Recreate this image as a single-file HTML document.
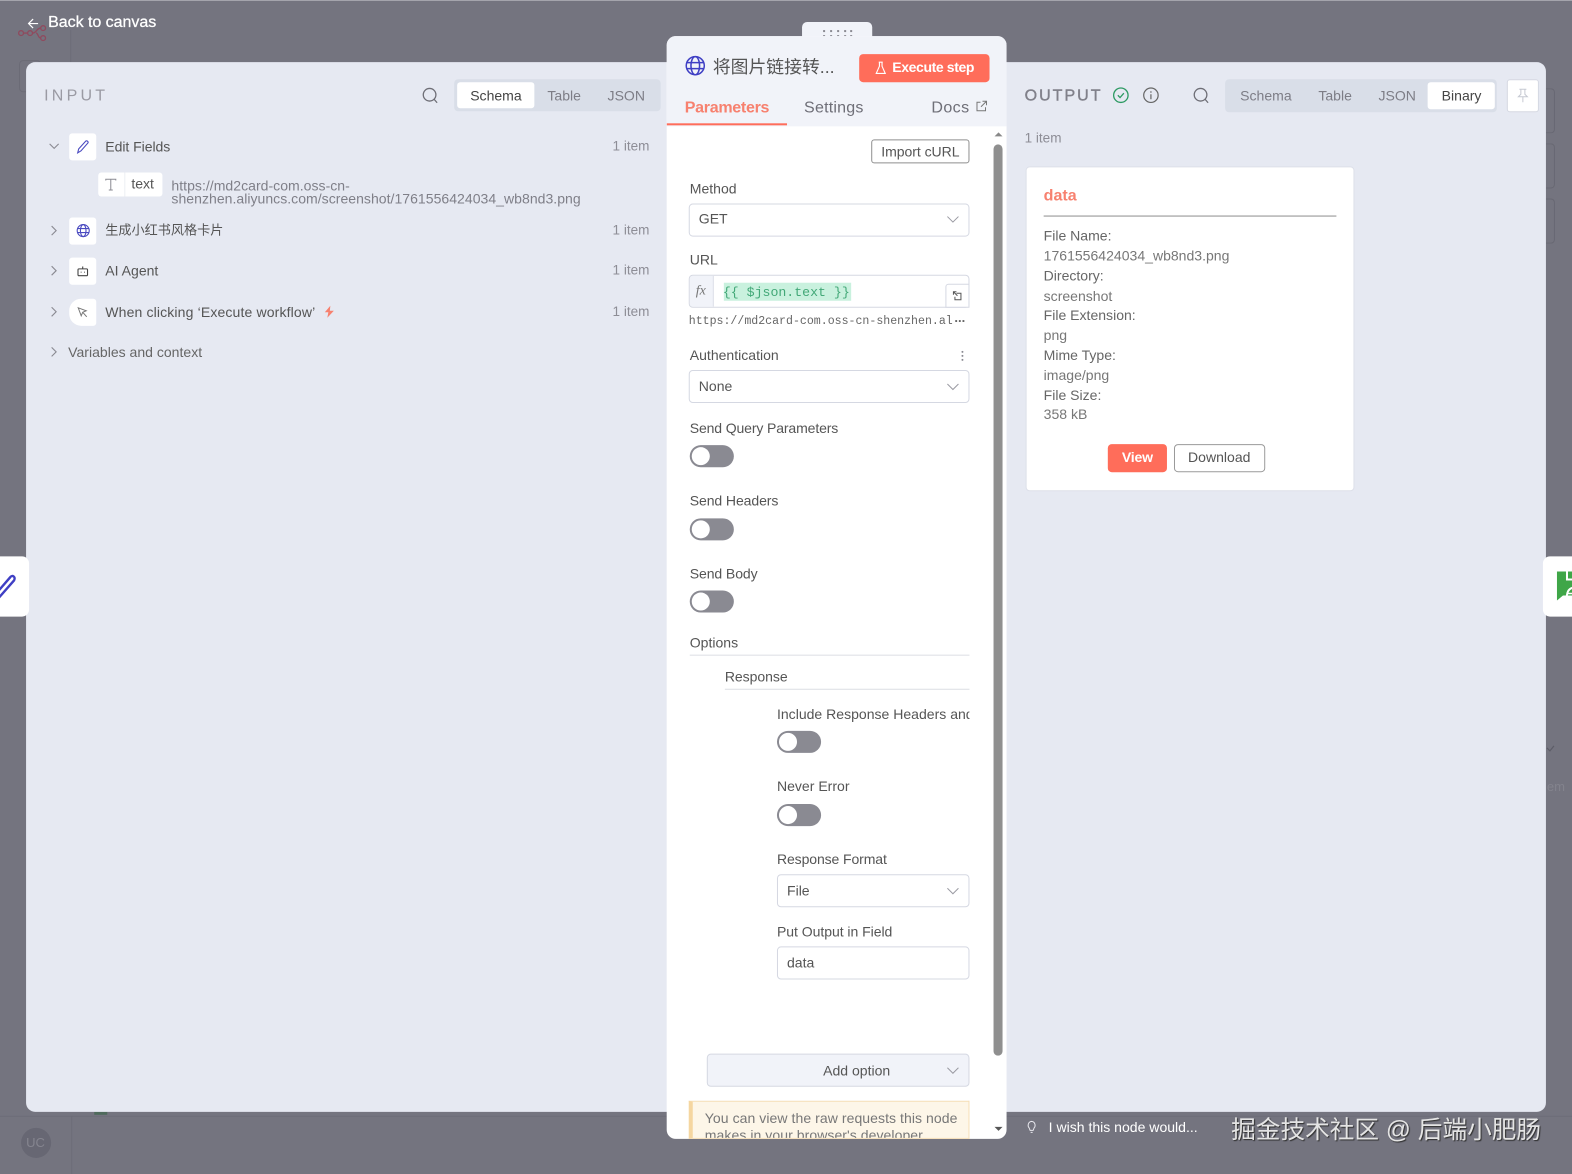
<!DOCTYPE html>
<html><head><meta charset="utf-8"><style>
html,body{margin:0;padding:0;width:1572px;height:1174px;overflow:hidden;background:#74747f}
#r{position:absolute;left:0;top:0;width:1568px;height:1171px;transform:scale(1.00255);transform-origin:0 0;font-family:"Liberation Sans","Noto Sans CJK SC",sans-serif;color:#555;filter:blur(.25px)}
.a{position:absolute;box-sizing:border-box}
.t{position:absolute;white-space:nowrap;line-height:20px;font-size:14px;color:#555}
.g{color:#8d8d96}
.sel{position:absolute;box-sizing:border-box;background:#fff;border:1px solid #d5d8e2;border-radius:4px}
.tg{position:absolute;width:44px;height:22px;border-radius:11px;background:#8a8a92}
.tg:after{content:"";position:absolute;left:2px;top:2px;width:18px;height:18px;border-radius:50%;background:#fff}
svg{position:absolute;overflow:visible;fill:none}
</style></head><body><div id="r">

<!-- dim canvas -->
<div class="a" style="left:0;top:0;width:1568px;height:1px;background:#a4a4ac"></div>
<svg style="left:18px;top:25px" width="32" height="20" stroke="#8f4a5e" stroke-width="1.300"><circle cx="3" cy="8" r="2.400"/><circle cx="12" cy="8" r="2.400"/><circle cx="25" cy="3" r="2.400"/><circle cx="25" cy="13" r="2.400"/><path d="M5.500 8h4M14.500 8c4 0 4-5 8-5M18 8c2 0 2 5 4.500 5"/></svg>
<div class="a" style="left:19px;top:60px;width:22px;height:32px;border:1px solid #6b6b76;border-radius:4px"></div>
<div class="a" style="left:70px;top:30px;width:1px;height:32px;background:#6d6d78"></div>
<div class="a" style="left:0;top:1113px;width:1568px;height:1px;background:#6d6d78"></div>
<div class="a" style="left:71px;top:1113px;width:1px;height:58px;background:#6d6d78"></div>
<div class="a" style="left:21px;top:1125px;width:30px;height:30px;border-radius:50%;background:#676773"></div>
<div class="t" style="left:26px;top:1130px;color:#85858f;font-size:13px">UC</div>
<div class="a" style="left:94px;top:1109px;width:13px;height:3px;background:#4f6a5c"></div>
<div class="a" style="left:1542px;top:88px;width:9px;height:45px;border:1px solid #686873;border-left:0;border-radius:0 4px 4px 0"></div>
<div class="a" style="left:1542px;top:143px;width:9px;height:45px;border:1px solid #686873;border-left:0;border-radius:0 4px 4px 0"></div>
<div class="a" style="left:1542px;top:198px;width:9px;height:45px;border:1px solid #686873;border-left:0;border-radius:0 4px 4px 0"></div>
<svg style="left:1542px;top:743px" width="10" height="8" stroke="#5d5d68" stroke-width="1.200"><path d="M1 3l3 3 4-5"/></svg>
<div class="t" style="left:1543px;top:775px;font-size:13px;color:#83838d">em</div>

<!-- back -->
<svg style="left:27px;top:17px" width="13" height="13" stroke="#fff" stroke-width="1.200"><path d="M11 6.500H1.500M6 2L1.500 6.500 6 11"/></svg>
<div class="t" style="left:48px;top:13px;color:#fff;font-size:16px;letter-spacing:-.05px;-webkit-text-stroke:.25px #fff">Back to canvas</div>

<!-- main panel -->
<div class="a" style="left:26px;top:62px;width:1516px;height:1047px;background:#e6e9f2;border-radius:9px"></div>

<!-- side cards -->
<div class="a" style="left:0;top:555px;width:29px;height:60px;background:#fff;border-radius:0 7px 7px 0;overflow:hidden">
<svg style="left:0;top:0" width="29" height="60" stroke="#3f3fc4" stroke-width="2.400"><path d="M-3 36L10 21C12 18 16 20 14 24L-1 41"/></svg></div>
<div class="a" style="left:1539px;top:555px;width:29px;height:60px;background:#fff;border-radius:7px 0 0 7px;overflow:hidden">
<svg style="left:14px;top:15px" width="20" height="30"><path d="M0 0h16v24H6l-6 5z" fill="#3fa648"/><path d="M10 0V8H16" stroke="#fff" stroke-width="2"/><path d="M9.500 30c0-10 2-13 7-14" stroke="#fff" stroke-width="2"/><path d="M11 22h6" stroke="#fff" stroke-width="1.500"/></svg></div>

<!-- INPUT -->
<div class="t" style="left:44px;top:86px;font-size:16px;letter-spacing:3.200px;color:#9a9aa3">INPUT</div>
<svg style="left:421px;top:87px" width="16" height="17" stroke="#6e6e76" stroke-width="1.300"><circle cx="7.500" cy="7.500" r="6.300"/><path d="M12 12l3 3.500"/></svg>
<div class="a" style="left:453px;top:79px;width:206px;height:32px;background:#d9dee8;border-radius:4px"></div>
<div class="a" style="left:456px;top:82px;width:77px;height:26px;background:#fff;border-radius:3px"></div>
<div class="t" style="left:469px;top:85px;color:#444">Schema</div>
<div class="t" style="left:546px;top:85px;color:#7d7d86">Table</div>
<div class="t" style="left:606px;top:85px;color:#7d7d86">JSON</div>

<svg style="left:48px;top:142px" width="12" height="8" stroke="#8a8a92" stroke-width="1.100"><path d="M1.500 1.500L6 6l4.500-4.500"/></svg>
<div class="a" style="left:69px;top:133px;width:27px;height:27px;background:#fff;border-radius:3px"></div>
<svg style="left:76px;top:139px" width="14" height="15" stroke="#4a4ac0" stroke-width="1.100"><path d="M1.500 13.500l1-4L9.500 1.800c1-1 3 .5 2.200 1.800L4.800 11.500z"/></svg>
<div class="t" style="left:105px;top:135.500px;letter-spacing:-.05px">Edit Fields</div>
<div class="t g" style="left:611px;top:135.500px;font-size:13.500px">1 item</div>

<div class="a" style="left:98px;top:172px;width:64px;height:24px;background:#fff;border-radius:3px"></div>
<div class="a" style="left:124px;top:172px;width:1px;height:24px;background:#eceef3"></div>
<svg style="left:105px;top:178px" width="11" height="12" stroke="#8a8a92" stroke-width="1"><path d="M.5 2V.800h10V2M5.500.800V11.500M3.500 11.500h4"/></svg>
<div class="t" style="left:131px;top:173px;font-size:14px">text</div>
<div class="t g" style="left:171px;top:179px;line-height:13px;font-size:14px;letter-spacing:.02px;color:#7f7f88">https://md2card-com.oss-cn-<br>shenzhen.aliyuncs.com/screenshot/1761556424034_wb8nd3.png</div>

<svg style="left:50px;top:224px" width="8" height="12" stroke="#8a8a92" stroke-width="1.100"><path d="M1.500 1.500L6 6l-4.500 4.500"/></svg>
<div class="a" style="left:69px;top:217px;width:27px;height:27px;background:#fff;border-radius:3px"></div>
<svg style="left:76px;top:223px" width="14" height="14" stroke="#4a4ac0" stroke-width="1.100"><circle cx="7" cy="7" r="6"/><ellipse cx="7" cy="7" rx="2.800" ry="6"/><path d="M1 5h12M1 9h12"/></svg>
<div class="t" style="left:105px;top:219.500px;font-size:13.100px">生成小红书风格卡片</div>
<div class="t g" style="left:611px;top:219.500px;font-size:13.500px">1 item</div>

<svg style="left:50px;top:264px" width="8" height="12" stroke="#8a8a92" stroke-width="1.100"><path d="M1.500 1.500L6 6l-4.500 4.500"/></svg>
<div class="a" style="left:69px;top:257px;width:27px;height:27px;background:#fff;border-radius:3px"></div>
<svg style="left:77px;top:265px" width="11" height="11" stroke="#444" stroke-width="1.100"><rect x=".8" y="3.200" width="9.500" height="6.800" rx="1"/><path d="M5.500 3V.8M3.500 6.500h.8M6.800 6.500h.8"/></svg>
<div class="t" style="left:105px;top:260px">AI Agent</div>
<div class="t g" style="left:611px;top:260px;font-size:13.500px">1 item</div>

<svg style="left:50px;top:305px" width="8" height="12" stroke="#8a8a92" stroke-width="1.100"><path d="M1.500 1.500L6 6l-4.500 4.500"/></svg>
<div class="a" style="left:69px;top:298px;width:27px;height:27px;background:#fff;border-radius:12px 3px 3px 12px"></div>
<svg style="left:77px;top:306px" width="11" height="11" stroke="#777" stroke-width="1"><path d="M1 1l8 3-3.500 1.500L4 9zM6 6l3.500 4"/></svg>
<div class="t" style="left:105px;top:300.500px;letter-spacing:.13px">When clicking ‘Execute workflow’</div>
<svg style="left:323px;top:305px" width="11" height="12"><path d="M6.500 0L1 6.500h3.500L3.500 12 10 5H6z" fill="#f7816f"/></svg>
<div class="t g" style="left:611px;top:300.500px;font-size:13.500px">1 item</div>

<svg style="left:50px;top:345px" width="8" height="12" stroke="#8a8a92" stroke-width="1.100"><path d="M1.500 1.500L6 6l-4.500 4.500"/></svg>
<div class="t" style="left:68px;top:341px;color:#666">Variables and context</div>

<!-- OUTPUT -->
<div class="t" style="left:1022px;top:85.500px;font-size:16px;letter-spacing:2px;color:#80808a;-webkit-text-stroke:.4px #80808a">OUTPUT</div>
<svg style="left:1110px;top:87px" width="16" height="16" stroke="#2d9a63" stroke-width="1.300"><circle cx="8" cy="8" r="7.200"/><path d="M5 8l2.200 2.300L11 6"/></svg>
<svg style="left:1140px;top:87px" width="16" height="16" stroke="#666" stroke-width="1.200"><circle cx="8" cy="8" r="7.200"/><path d="M8 7v5M8 4v1.500"/></svg>
<svg style="left:1190px;top:87px" width="16" height="17" stroke="#6e6e76" stroke-width="1.300"><circle cx="7.500" cy="7.500" r="6.300"/><path d="M12 12l3 3.500"/></svg>
<div class="a" style="left:1222px;top:79px;width:271px;height:33px;background:#d9dee8;border-radius:4px"></div>
<div class="a" style="left:1424px;top:82px;width:67px;height:27px;background:#fff;border-radius:3px"></div>
<div class="t" style="left:1237px;top:85px;color:#7d7d86">Schema</div>
<div class="t" style="left:1315px;top:85px;color:#7d7d86">Table</div>
<div class="t" style="left:1375px;top:85px;color:#7d7d86">JSON</div>
<div class="t" style="left:1438px;top:85px;color:#444">Binary</div>
<div class="a" style="left:1503px;top:79px;width:32px;height:33px;background:#fff;border:1px solid #d5d8e2;border-radius:3px"></div>
<svg style="left:1513px;top:88px" width="12" height="15" stroke="#c6c9d2" stroke-width="1"><path d="M2.500 1h7M4 1v5L1.500 8.500h9L8 6V1M6 8.500V14"/></svg>
<div class="t g" style="left:1022px;top:128px;font-size:13.500px">1 item</div>

<div class="a" style="left:1023px;top:165.500px;width:328px;height:324px;background:#fff;border:1px solid #dde0e9;border-radius:4px"></div>
<div class="t" style="left:1041px;top:186px;font-size:16px;font-weight:bold;color:#f7816f">data</div>
<div class="a" style="left:1041px;top:215px;width:292px;height:1px;background:#8d8d8d"></div>
<div class="t" style="left:1041px;top:224.500px;color:#666">File Name:</div>
<div class="t" style="left:1041px;top:244.500px;color:#777">1761556424034_wb8nd3.png</div>
<div class="t" style="left:1041px;top:264.500px;color:#666">Directory:</div>
<div class="t" style="left:1041px;top:284.500px;color:#777">screenshot</div>
<div class="t" style="left:1041px;top:303.500px;color:#666">File Extension:</div>
<div class="t" style="left:1041px;top:323.500px;color:#777">png</div>
<div class="t" style="left:1041px;top:343.500px;color:#666">Mime Type:</div>
<div class="t" style="left:1041px;top:363.500px;color:#777">image/png</div>
<div class="t" style="left:1041px;top:383.500px;color:#666">File Size:</div>
<div class="t" style="left:1041px;top:402.500px;color:#777">358 kB</div>
<div class="a" style="left:1105px;top:442.500px;width:59px;height:28px;background:#ff6d5a;border-radius:4px"></div>
<div class="t" style="left:1119px;top:446px;color:#fff;font-weight:bold;letter-spacing:-.2px">View</div>
<div class="a" style="left:1171px;top:442.500px;width:91px;height:28px;background:#fff;border:1px solid #9a9a9a;border-radius:4px"></div>
<div class="t" style="left:1185px;top:446px">Download</div>

<!-- bottom -->
<svg style="left:1024px;top:1117px" width="10" height="14" stroke="#e8e8ee" stroke-width="1"><path d="M2.500 8C1 6.500 1 2 5 1.500 9 2 9 6.500 7.500 8L6.500 10.500h-3zM4 12.500h2"/></svg>
<div class="t" style="left:1046px;top:1114px;color:#fff;font-size:14px">I wish this node would...</div>
<div class="t" style="left:1228px;top:1113px;font-size:24.600px;line-height:30px;color:#e4e4e4;text-shadow:1px 1px 1px #2e2e2e">掘金技术社区 @ 后端小肥肠</div>

<!-- center panel -->
<div class="a" style="left:800px;top:22px;width:70px;height:20px;background:#f1f3f9;border-radius:5px 5px 0 0"></div>
<svg style="left:821px;top:29px" width="29" height="9"><g fill="#8a8a92"><rect x="0" y="1" width="2" height="2"/><rect x="7" y="1" width="2" height="2"/><rect x="14" y="1" width="2" height="2"/><rect x="21" y="1" width="2" height="2"/><rect x="27" y="1" width="2" height="2"/><rect x="0" y="6" width="2" height="2"/><rect x="7" y="6" width="2" height="2"/><rect x="14" y="6" width="2" height="2"/><rect x="21" y="6" width="2" height="2"/><rect x="27" y="6" width="2" height="2"/></g></svg>
<div class="a" style="left:665px;top:36px;width:339px;height:1100px;background:#fff;border-radius:9px;overflow:hidden">
<div class="a" style="left:0;top:0;width:339px;height:90px;background:#f1f3f9"></div>
<div class="a" style="left:0;top:87px;width:120px;height:2px;background:#ff6d5a"></div>
</div>
<svg style="left:683px;top:55px" width="21" height="21" stroke="#3f3fc4" stroke-width="1.500"><circle cx="10.500" cy="10.500" r="9"/><ellipse cx="10.500" cy="10.500" rx="4.300" ry="9"/><path d="M2 7.500h17M2 13.500h17"/></svg>
<div class="t" style="left:711px;top:57px;font-size:17.800px;color:#555">将图片链接转...</div>
<div class="a" style="left:857px;top:54px;width:130px;height:28px;background:#ff6d5a;border-radius:4px"></div>
<svg style="left:873px;top:61px" width="11" height="14" stroke="#fff" stroke-width="1.100"><path d="M3.500 1h4M4.200 1v4L1 12.300h9L6.800 5V1"/></svg>
<div class="t" style="left:890px;top:57px;color:#fff;font-size:14px;font-weight:bold;letter-spacing:-.4px">Execute step</div>
<div class="t" style="left:683px;top:98px;font-size:16px;font-weight:bold;letter-spacing:-.3px;color:#f7816f">Parameters</div>
<div class="t" style="left:802px;top:98px;font-size:16px;letter-spacing:.2px;color:#6f6f78">Settings</div>
<div class="t" style="left:929px;top:98px;font-size:16px;letter-spacing:.4px;color:#6f6f78">Docs</div>
<svg style="left:973px;top:100px" width="12" height="12" stroke="#777" stroke-width="1"><path d="M5 2H1.500v8.500H10V7M7 1h4v4M11 1L5.500 6.500"/></svg>

<!-- scrollbar -->
<svg style="left:991px;top:131px" width="10" height="7"><path d="M5 1l4 4H1z" fill="#888"/></svg>
<div class="a" style="left:991px;top:144px;width:9px;height:909px;background:#8f8f8f;border-radius:5px"></div>
<svg style="left:991px;top:1122px" width="10" height="7"><path d="M5 6L1 2h8z" fill="#555"/></svg>

<div class="a" style="left:869px;top:139px;width:98px;height:24px;border:1px solid #8f8f8f;border-radius:3px;background:#fff"></div>
<div class="t" style="left:879px;top:141px;letter-spacing:-.05px">Import cURL</div>

<div class="t" style="left:688px;top:178px">Method</div>
<div class="sel" style="left:687px;top:203px;width:280px;height:33px"></div>
<div class="t" style="left:697px;top:208px">GET</div>
<svg style="left:944px;top:215px" width="13" height="8" stroke="#9a9aa2" stroke-width="1"><path d="M1 1l5.500 5.500L12 1"/></svg>

<div class="t" style="left:688px;top:249px">URL</div>
<div class="sel" style="left:687px;top:274px;width:280px;height:33px;overflow:hidden"><div class="a" style="left:0;top:0;width:24px;height:31px;background:#f1f3f9;border-right:1px solid #dde0e9"></div></div>
<div class="t" style="left:694px;top:281px;font-family:'Liberation Serif',serif;font-style:italic;font-size:14px;color:#777">fx</div>
<div class="a" style="left:722px;top:282px;width:127px;height:18px;background:#c9f1de"></div>
<div class="t" style="left:721px;top:281.500px;font-family:'Liberation Mono',monospace;font-size:13.200px;color:#42a877">{{ $json.text }}</div>
<div class="a" style="left:943px;top:283px;width:24px;height:24px;background:#fff;border:1px solid #d5d8e2;border-radius:3px 0 0 0"></div>
<svg style="left:950px;top:290px" width="10" height="10" stroke="#555" stroke-width="1"><path d="M1 4V1h3M1 1l4 4M4 2.500h4.500V9H2.500V6"/></svg>
<div class="t" style="left:687px;top:311px;font-family:'Liberation Mono','Liberation Serif',monospace;font-size:11.550px;color:#666">https://md2card-com.oss-cn-shenzhen.al</div>
<div class="t" style="left:952px;top:307px;font-size:13px;font-weight:bold;color:#666">...</div>

<div class="t" style="left:688px;top:344px">Authentication</div>
<svg style="left:958px;top:349px" width="4" height="12"><g fill="#8a8a92"><circle cx="2" cy="2" r="1"/><circle cx="2" cy="6" r="1"/><circle cx="2" cy="10" r="1"/></g></svg>
<div class="sel" style="left:687px;top:369px;width:280px;height:33px"></div>
<div class="t" style="left:697px;top:375px">None</div>
<svg style="left:944px;top:382px" width="13" height="8" stroke="#9a9aa2" stroke-width="1"><path d="M1 1l5.500 5.500L12 1"/></svg>

<div class="t" style="left:688px;top:417px;letter-spacing:-.14px">Send Query Parameters</div>
<div class="tg" style="left:687.500px;top:444px"></div>
<div class="t" style="left:688px;top:489px;letter-spacing:-.1px">Send Headers</div>
<div class="tg" style="left:687.500px;top:516.500px"></div>
<div class="t" style="left:688px;top:561.500px;letter-spacing:-.1px">Send Body</div>
<div class="tg" style="left:687.500px;top:589px"></div>

<div class="t" style="left:688px;top:630.500px">Options</div>
<div class="a" style="left:688px;top:653px;width:279px;height:1px;background:#dcdee4"></div>
<div class="t" style="left:723px;top:664.500px;letter-spacing:-.05px">Response</div>
<div class="a" style="left:723px;top:687px;width:244px;height:1px;background:#dcdee4"></div>

<div class="a" style="left:775px;top:702px;width:192px;height:20px;overflow:hidden"><div class="t" style="left:0;top:0">Include Response Headers and Status</div></div>
<div class="tg" style="left:775px;top:729px"></div>
<div class="t" style="left:775px;top:774px">Never Error</div>
<div class="tg" style="left:775px;top:802px"></div>

<div class="t" style="left:775px;top:847px;letter-spacing:-.12px">Response Format</div>
<div class="sel" style="left:775px;top:872px;width:192px;height:33px"></div>
<div class="t" style="left:785px;top:878px">File</div>
<svg style="left:944px;top:885px" width="13" height="8" stroke="#9a9aa2" stroke-width="1"><path d="M1 1l5.500 5.500L12 1"/></svg>

<div class="t" style="left:775px;top:919px;letter-spacing:-.05px">Put Output in Field</div>
<div class="sel" style="left:775px;top:944px;width:192px;height:33px"></div>
<div class="t" style="left:785px;top:950px">data</div>

<div class="a" style="left:705px;top:1051px;width:262px;height:33px;background:#f1f3f9;border:1px solid #d5d8e2;border-radius:4px"></div>
<div class="t" style="left:821px;top:1058px">Add option</div>
<svg style="left:944px;top:1064px" width="13" height="8" stroke="#9a9aa2" stroke-width="1"><path d="M1 1l5.500 5.500L12 1"/></svg>

<div class="a" style="left:687px;top:1098px;width:280px;height:38px;background:#fdf6e8;border:1px solid #f6dfb8;border-left:4px solid #f5d6a0;overflow:hidden">
<div class="t" style="left:12px;top:8px;line-height:17px;letter-spacing:.05px;color:#777">You can view the raw requests this node<br>makes in your browser's developer</div>
</div>

</div></body></html>
